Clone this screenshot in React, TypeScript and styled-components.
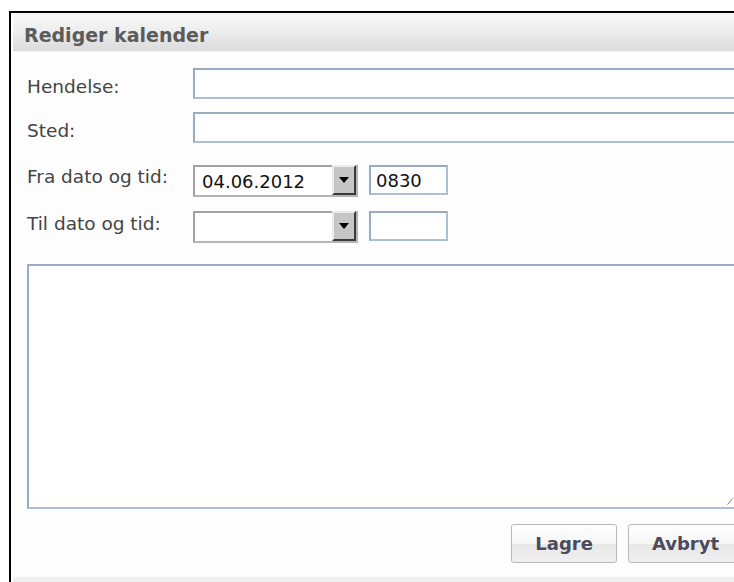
import styled, { createGlobalStyle } from "styled-components";

const GlobalStyle = createGlobalStyle`
    html, body {
        margin: 0;
        padding: 0;
        background: #fff;
        overflow: hidden;
    }
    body {
        font-family: "DejaVu Sans", Verdana, sans-serif;
    }
`;

const Page = styled.div`
    padding: 11px 0 0 9px;
    width: 800px;
    height: 582px;
    box-sizing: border-box;
`;

const Dialog = styled.div`
    width: 780px;
    border-top: 2px solid #000;
    border-left: 2px solid #000;
    padding: 1px 0 0 2px;
    background: #fff;
`;

const Header = styled.div`
    height: 38px;
    padding: 9px 0 0 11px;
    box-sizing: border-box;
    border-top: 1px solid #ececec;
    border-bottom: 1px solid #f4f4f4;
    background: linear-gradient(to bottom, #f8f8f8 0%, #ececec 50%, #dbdbdb 100%);
    color: #5b5b5b;
    font-size: 19px;
    font-weight: bold;
    line-height: 22px;
`;

const Body = styled.div`
    width: 731px;
    padding: 16px 0 0 14px;
    box-sizing: border-box;
    background: #fdfdfd;
`;

const Row = styled.div<{ $gap: number }>`
    display: flex;
    align-items: flex-start;
    margin-bottom: ${({ $gap }) => $gap}px;
`;

const Label = styled.label<{ $offset: number }>`
    width: 166px;
    flex: none;
    padding-top: ${({ $offset }) => $offset}px;
    color: #444;
    font-size: 18.5px;
    line-height: 21px;
`;

const TextInput = styled.div<{ $width: number; $height: number }>`
    width: ${({ $width }) => $width}px;
    height: ${({ $height }) => $height}px;
    box-sizing: border-box;
    border: 2px solid #adbfd3;
    border-top-color: #97abc3;
    border-left-color: #97abc3;
    background: #fff;
    padding-left: 5px;
    display: flex;
    align-items: center;
    color: #111;
    font-size: 18px;
    flex: none;
`;

const DateSelect = styled.div`
    width: 165px;
    height: 32px;
    margin-right: 11px;
    box-sizing: border-box;
    border: 2px solid #b5b5b5;
    border-top-color: #a3a3a3;
    border-left-color: #a3a3a3;
    background: #fff;
    display: flex;
    align-items: center;
    flex: none;
    color: #111;
    font-size: 18px;
`;

const DateText = styled.span`
    flex: 1;
    padding-left: 7px;
`;

const DropButton = styled.div`
    width: 24px;
    height: 30px;
    margin-top: -3px;
    box-sizing: border-box;
    background: #c6c6c6;
    border-top: 2px solid #ececec;
    border-left: 2px solid #ececec;
    border-right: 2px solid #3a3a3a;
    border-bottom: 2px solid #3a3a3a;
    display: flex;
    align-items: center;
    justify-content: center;
`;

const NoteBox = styled.div`
    position: relative;
    width: 709px;
    height: 245px;
    margin-bottom: 15px;
`;

const NoteArea = styled.textarea`
    display: block;
    width: 100%;
    height: 100%;
    box-sizing: border-box;
    border: 2px solid #adbfd3;
    border-top-color: #97abc3;
    border-left-color: #97abc3;
    resize: none;
    outline: none;
    background: #fff;
`;

// resize corner, drawn over the textarea
const Grip = styled.svg`
    position: absolute;
    right: 3px;
    bottom: 4px;
`;

const Buttons = styled.div`
    display: flex;
    justify-content: flex-end;
    gap: 11px;
    margin-right: 1px;
    padding-bottom: 14px;
`;

const Button = styled.button`
    height: 39px;
    box-sizing: border-box;
    padding: 0 23px;
    border: 1px solid #b9b9b9;
    border-radius: 3px;
    background: linear-gradient(to bottom, #fefefe 0%, #f6f6f6 50%, #e8e8e8 52%, #efefef 100%);
    color: #4a4a5c;
    font-family: "DejaVu Sans", Verdana, sans-serif;
    font-size: 18px;
    font-weight: bold;
    min-width: 105px;
    cursor: pointer;
`;

const Footer = styled.div`
    height: 12px;
    background: #efefef;
`;

function Arrow() {
    return (
        <svg width="10" height="6" viewBox="0 0 10 6">
            <path d="M0 0h10L5 6z" fill="#000" />
        </svg>
    );
}

export default function App() {
    return (
        <>
            <GlobalStyle />
            <Page>
                <Dialog>
                    <Header>Rediger kalender</Header>
                    <Body>
                        <Row $gap={13}>
                            <Label $offset={8}>Hendelse:</Label>
                            <TextInput $width={544} $height={31} />
                        </Row>
                        <Row $gap={22}>
                            <Label $offset={8}>Sted:</Label>
                            <TextInput $width={544} $height={31} />
                        </Row>
                        <Row $gap={14}>
                            <Label $offset={1}>Fra dato og tid:</Label>
                            <DateSelect>
                                <DateText>04.06.2012</DateText>
                                <DropButton><Arrow /></DropButton>
                            </DateSelect>
                            <TextInput $width={79} $height={30}>0830</TextInput>
                        </Row>
                        <Row $gap={21}>
                            <Label $offset={2}>Til dato og tid:</Label>
                            <DateSelect>
                                <DateText />
                                <DropButton><Arrow /></DropButton>
                            </DateSelect>
                            <TextInput $width={79} $height={30} />
                        </Row>
                        <NoteBox>
                            <NoteArea />
                            <Grip width="6" height="7" viewBox="0 0 6 7">
                                <path d="M0.5 6.5L5.5 0.5" stroke="#7a7a7a" strokeWidth="1" />
                            </Grip>
                        </NoteBox>
                        <Buttons>
                            <Button>Lagre</Button>
                            <Button>Avbryt</Button>
                        </Buttons>
                    </Body>
                    <Footer />
                </Dialog>
            </Page>
        </>
    );
}
